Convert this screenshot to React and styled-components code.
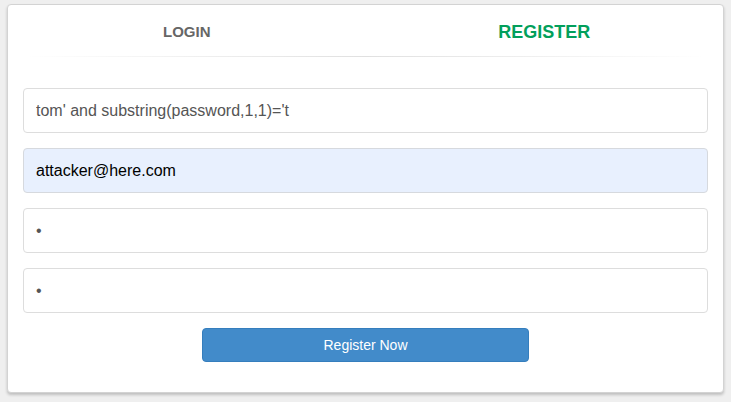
import React from "react";
import styled, { createGlobalStyle } from "styled-components";

const GlobalStyle = createGlobalStyle`
	html, body {
		margin: 0;
		padding: 0;
		background: #efefef;
		font-family: "Liberation Sans", Arial, sans-serif;
	}
	* {
		box-sizing: border-box;
	}
`;

const fields = [
	{ type: "text", value: "tom' and substring(password,1,1)='t" },
	{ type: "email", value: "attacker@here.com", autofilled: true },
	{ type: "password", value: "a" },
	{ type: "password", value: "a" }
];

const App = () => {
	return (
		<Page>
			<GlobalStyle />
			<Panel>
				<Heading>
					<Tabs>
						<Tab href="#login">LOGIN</Tab>
						<Tab href="#register" active>
							REGISTER
						</Tab>
					</Tabs>
					<Divider />
				</Heading>
				<Body>
					<Form onSubmit={(e) => e.preventDefault()}>
						{fields.map((f, i) => (
							<Input
								key={i}
								type={f.type}
								value={f.value}
								autofilled={f.autofilled ? 1 : 0}
								readOnly
							/>
						))}
						<ButtonRow>
							<SubmitButton type="submit">Register Now</SubmitButton>
						</ButtonRow>
					</Form>
				</Body>
			</Panel>
		</Page>
	);
};

export default App;

const Page = styled.div`
	min-height: 100vh;
	padding: 4px 7px 0;
`;

const Panel = styled.div`
	background: #fff;
	border: 1px solid #d3d3d3;
	border-radius: 4px;
	box-shadow: 0 2px 3px rgba(0, 0, 0, 0.2);
	height: 389px;
`;

const Heading = styled.div`
	padding: 10px 15px 0;
`;

// row with negative margins, like a bootstrap .row of two col-xs-6
const Tabs = styled.div`
	display: grid;
	grid-template-columns: 1fr 1fr;
	align-items: center;
	height: 31px;
	margin: 0 -15px;
`;

const Tab = styled.a`
	text-align: center;
	text-decoration: none;
	font-weight: bold;
	font-size: ${(p) => (p.active ? "18px" : "15px")};
	color: ${(p) => (p.active ? "#029f5b" : "#666")};
	margin-top: ${(p) => (p.active ? "4px" : "2px")};
`;

const Divider = styled.hr`
	margin: 10px 0 0;
	border: 0;
	height: 1px;
	background-image: linear-gradient(
		to right,
		rgba(0, 0, 0, 0),
		rgba(0, 0, 0, 0.12),
		rgba(0, 0, 0, 0)
	);
`;

const Body = styled.div`
	padding: 31px 15px 15px;
`;

const Form = styled.form`
	display: flex;
	flex-direction: column;
	gap: 15px;
`;

const Input = styled.input`
	height: 45px;
	width: 100%;
	border: 1px solid ${(p) => (p.autofilled ? "#d6d9de" : "#ddd")};
	border-radius: 4px;
	padding: 0 12px;
	font-family: "Liberation Sans", Arial, sans-serif;
	font-size: 16px;
	color: ${(p) => (p.autofilled ? "#000" : "#555")};
	background: ${(p) => (p.autofilled ? "#e8f0fe" : "#fff")};
	outline: none;
`;

const ButtonRow = styled.div`
	display: flex;
	justify-content: center;
`;

const SubmitButton = styled.button`
	width: 327px;
	height: 34px;
	background: #428bca;
	border: 1px solid #357ebd;
	border-radius: 4px;
	color: #fff;
	font-family: "Liberation Sans", Arial, sans-serif;
	font-size: 14px;
	cursor: pointer;
`;
